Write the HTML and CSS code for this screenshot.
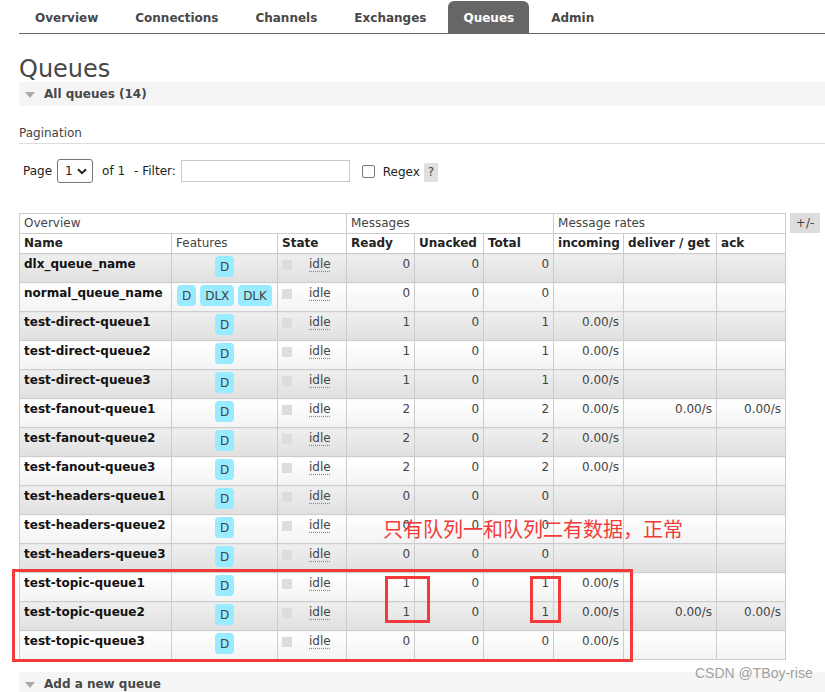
FILE: index.html
```html
<!DOCTYPE html>
<html lang="en">
<head>
<meta charset="utf-8">
<title>RabbitMQ Management - Queues</title>
<link rel="stylesheet" href="styles.css">
</head>
<body>
<div class="page">
  <ul class="tabs">
    <li class="tab">Overview</li>
    <li class="tab">Connections</li>
    <li class="tab">Channels</li>
    <li class="tab">Exchanges</li>
    <li class="tab active">Queues</li>
    <li class="tab">Admin</li>
  </ul>

  <h1 class="title">Queues</h1>

  <div class="sec-head"><span class="tri"></span>All queues (14)</div>

  <h3 class="pag-title">Pagination</h3>
  <div class="pager">
    <span class="lbl">Page</span>
    <span class="select"><span>1</span><svg class="chev" width="10" height="7" viewBox="0 0 10 7"><path d="M1 1.2 L5 5.2 L9 1.2" fill="none" stroke="#222" stroke-width="2"/></svg></span>
    <span class="lbl of">of 1</span>
    <span class="lbl filt">- Filter:</span>
    <span class="input"></span>
    <span class="check"></span>
    <span class="lbl regex">Regex</span>
    <span class="help">?</span>
  </div>

  <div class="list-wrap">
    <table class="list">
      <colgroup>
        <col class="c-name"><col class="c-feat"><col class="c-state">
        <col class="c-ready"><col class="c-unack"><col class="c-total">
        <col class="c-in"><col class="c-deliver"><col class="c-ack">
      </colgroup>
      <thead>
        <tr class="hrow">
          <th colspan="3" class="grp">Overview</th>
          <th colspan="3" class="grp">Messages</th>
          <th colspan="3" class="grp">Message rates</th>
        </tr>
        <tr class="hrow">
          <th>Name</th><th class="grp">Features</th><th>State</th>
          <th>Ready</th><th>Unacked</th><th>Total</th>
          <th>incoming</th><th>deliver / get</th><th>ack</th>
        </tr>
      </thead>
      <tbody>
        <tr class="alt1"><td class="name">dlx_queue_name</td><td class="feat"><span class="badge">D</span></td><td><span class="state"><span class="sq"></span><abbr>idle</abbr></span></td><td class="num">0</td><td class="num">0</td><td class="num">0</td><td class="num"></td><td class="num"></td><td class="num"></td></tr>
        <tr class="alt2"><td class="name">normal_queue_name</td><td class="feat"><span class="badge">D</span> <span class="badge">DLX</span> <span class="badge">DLK</span></td><td><span class="state"><span class="sq"></span><abbr>idle</abbr></span></td><td class="num">0</td><td class="num">0</td><td class="num">0</td><td class="num"></td><td class="num"></td><td class="num"></td></tr>
        <tr class="alt1"><td class="name">test-direct-queue1</td><td class="feat"><span class="badge">D</span></td><td><span class="state"><span class="sq"></span><abbr>idle</abbr></span></td><td class="num">1</td><td class="num">0</td><td class="num">1</td><td class="num">0.00/s</td><td class="num"></td><td class="num"></td></tr>
        <tr class="alt2"><td class="name">test-direct-queue2</td><td class="feat"><span class="badge">D</span></td><td><span class="state"><span class="sq"></span><abbr>idle</abbr></span></td><td class="num">1</td><td class="num">0</td><td class="num">1</td><td class="num">0.00/s</td><td class="num"></td><td class="num"></td></tr>
        <tr class="alt1"><td class="name">test-direct-queue3</td><td class="feat"><span class="badge">D</span></td><td><span class="state"><span class="sq"></span><abbr>idle</abbr></span></td><td class="num">1</td><td class="num">0</td><td class="num">1</td><td class="num">0.00/s</td><td class="num"></td><td class="num"></td></tr>
        <tr class="alt2"><td class="name">test-fanout-queue1</td><td class="feat"><span class="badge">D</span></td><td><span class="state"><span class="sq"></span><abbr>idle</abbr></span></td><td class="num">2</td><td class="num">0</td><td class="num">2</td><td class="num">0.00/s</td><td class="num">0.00/s</td><td class="num">0.00/s</td></tr>
        <tr class="alt1"><td class="name">test-fanout-queue2</td><td class="feat"><span class="badge">D</span></td><td><span class="state"><span class="sq"></span><abbr>idle</abbr></span></td><td class="num">2</td><td class="num">0</td><td class="num">2</td><td class="num">0.00/s</td><td class="num"></td><td class="num"></td></tr>
        <tr class="alt2"><td class="name">test-fanout-queue3</td><td class="feat"><span class="badge">D</span></td><td><span class="state"><span class="sq"></span><abbr>idle</abbr></span></td><td class="num">2</td><td class="num">0</td><td class="num">2</td><td class="num">0.00/s</td><td class="num"></td><td class="num"></td></tr>
        <tr class="alt1"><td class="name">test-headers-queue1</td><td class="feat"><span class="badge">D</span></td><td><span class="state"><span class="sq"></span><abbr>idle</abbr></span></td><td class="num">0</td><td class="num">0</td><td class="num">0</td><td class="num"></td><td class="num"></td><td class="num"></td></tr>
        <tr class="alt2"><td class="name">test-headers-queue2</td><td class="feat"><span class="badge">D</span></td><td><span class="state"><span class="sq"></span><abbr>idle</abbr></span></td><td class="num">0</td><td class="num">0</td><td class="num">0</td><td class="num"></td><td class="num"></td><td class="num"></td></tr>
        <tr class="alt1"><td class="name">test-headers-queue3</td><td class="feat"><span class="badge">D</span></td><td><span class="state"><span class="sq"></span><abbr>idle</abbr></span></td><td class="num">0</td><td class="num">0</td><td class="num">0</td><td class="num"></td><td class="num"></td><td class="num"></td></tr>
        <tr class="alt2"><td class="name">test-topic-queue1</td><td class="feat"><span class="badge">D</span></td><td><span class="state"><span class="sq"></span><abbr>idle</abbr></span></td><td class="num">1</td><td class="num">0</td><td class="num">1</td><td class="num">0.00/s</td><td class="num"></td><td class="num"></td></tr>
        <tr class="alt1"><td class="name">test-topic-queue2</td><td class="feat"><span class="badge">D</span></td><td><span class="state"><span class="sq"></span><abbr>idle</abbr></span></td><td class="num">1</td><td class="num">0</td><td class="num">1</td><td class="num">0.00/s</td><td class="num">0.00/s</td><td class="num">0.00/s</td></tr>
        <tr class="alt2"><td class="name">test-topic-queue3</td><td class="feat"><span class="badge">D</span></td><td><span class="state"><span class="sq"></span><abbr>idle</abbr></span></td><td class="num">0</td><td class="num">0</td><td class="num">0</td><td class="num">0.00/s</td><td class="num"></td><td class="num"></td></tr>
      </tbody>
    </table>
    <span class="toggle">+/-</span>
  </div>

  <div class="sec-head add"><span class="tri"></span>Add a new queue</div>

  <div class="note">只有队列一和队列二有数据，正常</div>
  <div class="mark mark-big"></div>
  <div class="mark mark-ready"></div>
  <div class="mark mark-total"></div>
  <div class="watermark">CSDN @TBoy-rise</div>
</div>
</body>
</html>
```

FILE: styles.css
```css
* { box-sizing: border-box; }
html, body { margin: 0; padding: 0; background: #fff; }
body {
  font-family: "DejaVu Sans", Verdana, sans-serif;
  font-size: 12px;
  line-height: 15px;
  color: #444;
}
.page {
  position: relative;
  padding-left: 19px;
  height: 692px;
  overflow: hidden;
}

/* tabs */
.tabs {
  display: flex;
  list-style: none;
  margin: 0;
  padding: 1px 0 0 1px;
  height: 34px;
  border-bottom: 1px solid #666;
}
.tab {
  padding: 0 15px;
  margin-right: 7px;
  height: 32px;
  line-height: 34px;
  font-weight: bold;
  color: #484848;
  border-radius: 6px 6px 0 0;
}
.tab.active { background: #666; color: #fff; }

.title {
  margin: 22px 0 0;
  font-size: 24px;
  line-height: 26px;
  font-weight: normal;
  color: #484848;
}

/* section headers */
.sec-head {
  display: flex;
  align-items: center;
  height: 24px;
  padding-left: 6px;
  background: #f5f5f5;
  font-weight: bold;
  color: #484848;
}
.tri {
  width: 0;
  height: 0;
  border-left: 5px solid transparent;
  border-right: 5px solid transparent;
  border-top: 6px solid #aaa;
  margin: 2px 9px 0 0;
}
.sec-head.add { margin-top: 12px; }

/* pagination */
.pag-title {
  margin: 20px 0 0;
  padding-bottom: 2px;
  border-bottom: 1px solid #ddd;
  font-size: 12px;
  line-height: 15px;
  font-weight: normal;
  color: #444;
}
.pager {
  display: flex;
  align-items: center;
  height: 24px;
  margin-top: 15px;
  padding-left: 4px;
  color: #222;
}
.select {
  display: flex;
  align-items: center;
  width: 36px;
  height: 24px;
  margin-left: 5px;
  padding: 0 5px 0 7px;
  border: 1px solid #767676;
  border-radius: 3px;
  justify-content: space-between;
}
.of { margin-left: 9px; }
.filt { margin-left: 9px; }
.input {
  width: 169px;
  height: 22px;
  margin-left: 5px;
  border: 1px solid #c8c8c8;
  background: #fff;
}
.check {
  width: 13px;
  height: 13px;
  margin-left: 12px;
  border: 1px solid #767676;
  border-radius: 2px;
}
.regex { margin-left: 8px; margin-top: 3px; }
.help {
  width: 14px;
  height: 19px;
  margin-left: 4px;
  margin-top: 3px;
  background: #e0e0e0;
  text-align: center;
  line-height: 19px;
  color: #444;
}

/* table */
.list-wrap {
  display: flex;
  align-items: flex-start;
  gap: 4px;
  margin-top: 30px;
}
table.list {
  border-collapse: collapse;
  table-layout: fixed;
  width: 766px;
}
.c-name { width: 152px; }
.c-feat { width: 106px; }
.c-state { width: 69px; }
.c-ready { width: 68px; }
.c-unack { width: 69px; }
.c-total { width: 70px; }
.c-in { width: 70px; }
.c-deliver { width: 93px; }
.c-ack { width: 69px; }

.list th, .list td {
  border: 1px solid #ccc;
  padding: 0 4px;
  white-space: nowrap;
  overflow: hidden;
}
.list th {
  height: 20px;
  text-align: left;
  vertical-align: middle;
  font-weight: bold;
  color: #222;
  background: #fff;
}
.list th.grp { font-weight: normal; color: #444; }
.list td {
  height: 29px;
  vertical-align: top;
  padding-top: 3px;
}
.list tr.alt1 td { background: linear-gradient(#efefef, #e0e0e0); }
.list tr.alt2 td { background: linear-gradient(#ffffff, #f3f3f3); }
.list td.name { font-weight: bold; color: #111; }
.list td.num { text-align: right; color: #444; }
.list td.feat { text-align: center; padding-top: 2px; }
.badge {
  display: inline-block;
  vertical-align: top;
  padding: 4px 5px 2px;
  line-height: 15px;
  background: #99ebff;
  border-radius: 4px;
  color: #444;
}
.state { display: flex; align-items: flex-start; }
.sq {
  width: 10px;
  height: 10px;
  margin: 3px 17px 0 0;
  background: #ddd;
}
.state abbr {
  text-decoration: underline dotted #888;
  text-underline-offset: 3px;
  color: #444;
}
.toggle {
  width: 30px;
  height: 20px;
  line-height: 20px;
  text-align: center;
  background: #ddd;
  color: #444;
}

/* annotation overlay */
.note {
  position: absolute;
  left: 383px;
  top: 517px;
  font-family: "Noto Sans CJK SC", sans-serif;
  font-size: 20px;
  line-height: 24px;
  color: #f23a3a;
  white-space: nowrap;
}
.mark {
  position: absolute;
  border: 3px solid #f23a3a;
}
.mark-big { left: 12px; top: 569px; width: 621px; height: 93px; }
.mark-ready { left: 385px; top: 576px; width: 45px; height: 47px; }
.mark-total { left: 530px; top: 576px; width: 31px; height: 47px; }
.watermark {
  position: absolute;
  left: 695px;
  top: 665px;
  font-family: "Liberation Sans", Arial, sans-serif;
  font-size: 14px;
  line-height: 16px;
  color: #a0a0a0;
  text-shadow: 0 0 2px #fff;
}
```
